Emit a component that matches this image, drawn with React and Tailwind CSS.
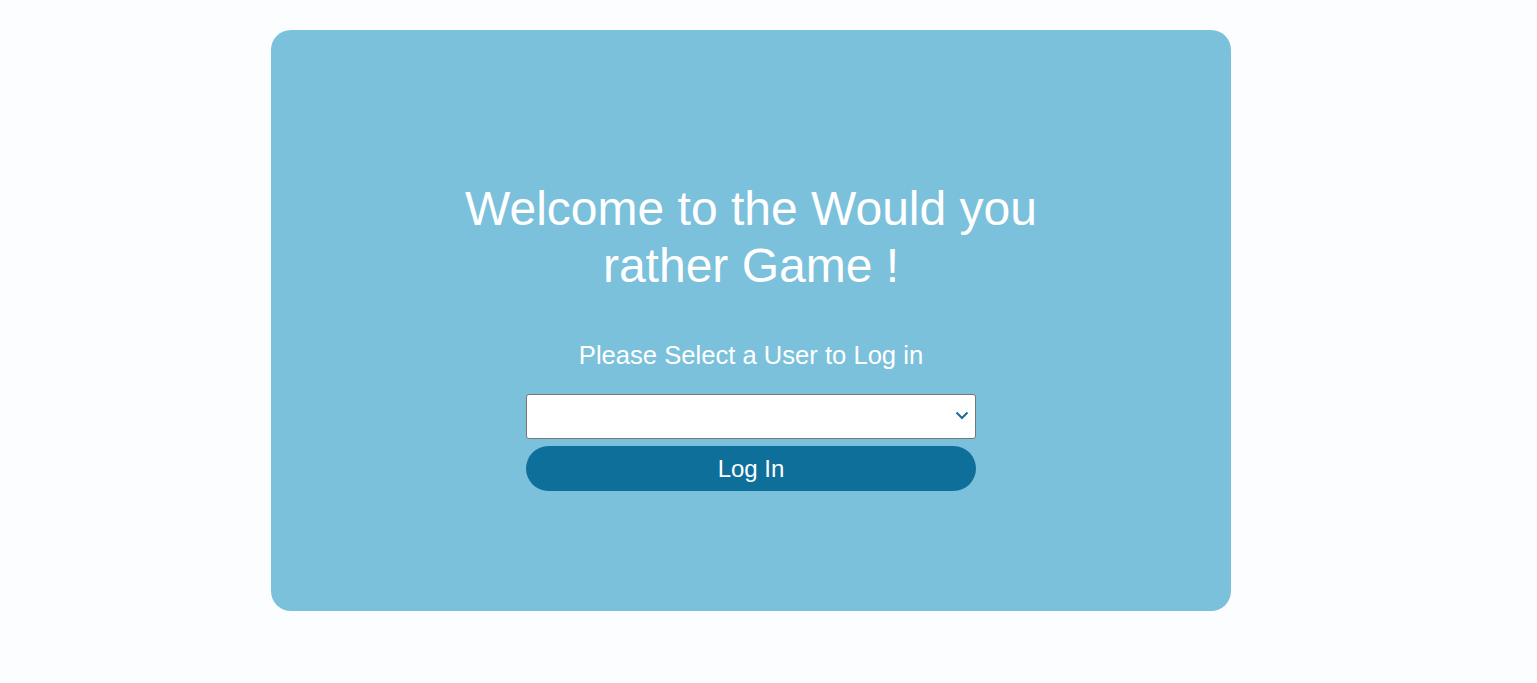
export default function App() {
  return (
    <div className="min-h-[683px] w-full bg-[#fbfdfe] pt-[30px]" style={{ fontFamily: '"Liberation Sans", Arial, sans-serif' }}>
      <div className="ml-[271px] flex h-[581px] w-[960px] flex-col items-center rounded-[20px] bg-[#7bc1dc] pt-[150px]">
        <h1 className="w-[640px] text-center text-[48px] leading-[57px] text-white">
          Welcome to the Would you rather Game !
        </h1>
        <p className="mt-[47px] text-center text-[25.6px] leading-[29px] text-white">
          Please Select a User to Log in
        </p>
        <div className="relative mt-[24px] h-[45px] w-[450px]">
          <select className="h-full w-full appearance-none rounded-[3px] border border-[#767676] bg-white px-2 text-[16px] outline-none">
            <option value=""></option>
          </select>
          <svg className="pointer-events-none absolute right-[6px] top-[15px]" width="16" height="12" viewBox="0 0 16 12">
            <path d="M2.5 3.5 L8 9 L13.5 3.5" fill="none" stroke="#1b6d9c" strokeWidth="2" />
          </svg>
        </div>
        <button className="mt-[7px] h-[45px] w-[450px] rounded-full bg-[#0f6f9b] text-[24px] text-white">
          Log In
        </button>
      </div>
    </div>
  );
}
